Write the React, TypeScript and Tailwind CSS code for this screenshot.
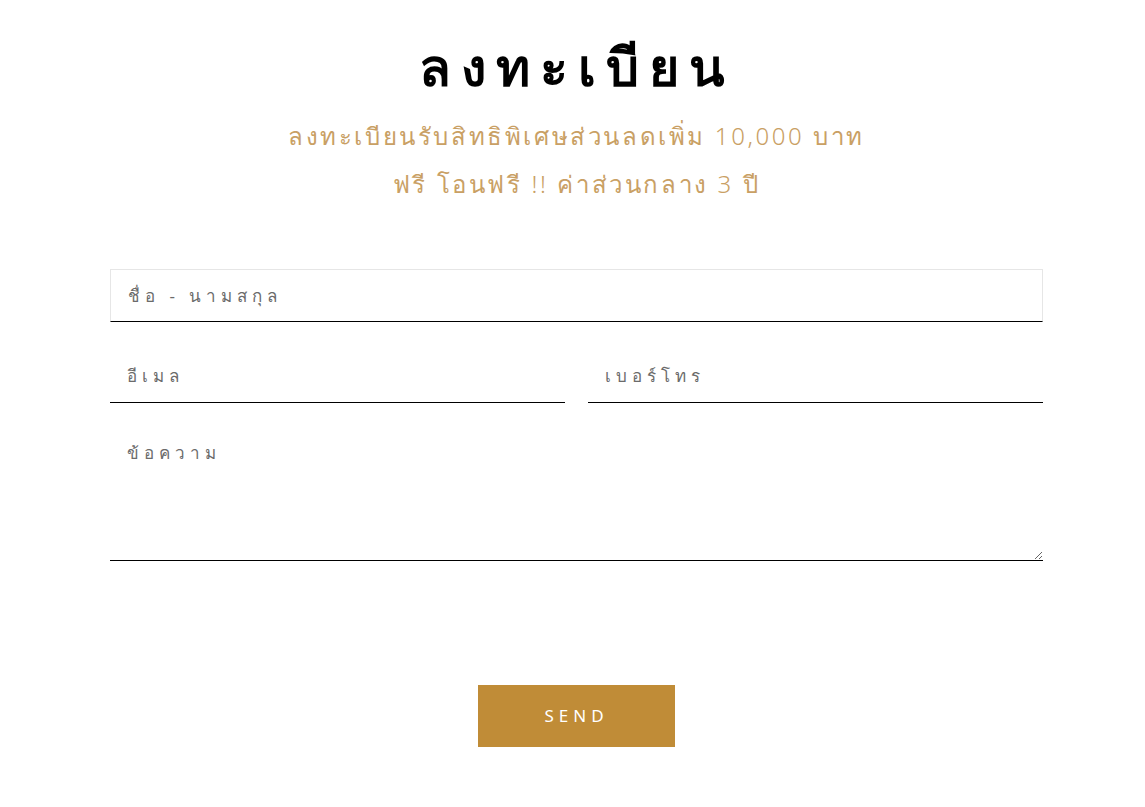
export default function App() {
  return (
    <div className="min-h-[807px] bg-white font-['Noto_Sans',sans-serif]">
      <div className="ml-[110px] w-[933px] pt-[34px]">
        <h1 className="text-center text-[52px] font-bold leading-[64px] tracking-[10px] text-black">
          ลงทะเบียน
        </h1>
        <p className="mt-[14px] text-center text-[24px] font-light leading-[48px] tracking-[2.6px] text-[#c9a064]">
          ลงทะเบียนรับสิทธิพิเศษส่วนลดเพิ่ม 10,000 บาท
          <br />
          ฟรี โอนฟรี !! ค่าส่วนกลาง 3 ปี
        </p>

        <form className="mt-[61px] flex flex-col" onSubmit={(e) => e.preventDefault()}>
          <input
            type="text"
            placeholder="ชื่อ - นามสกุล"
            className="h-[53px] w-full border border-b-black border-[#e6e6e6] px-[17px] text-[17px] tracking-[5px] text-gray-700 outline-none placeholder:text-[#6b6b6b]"
          />
          <div className="mt-[27px] flex gap-[23px]">
            <input
              type="email"
              placeholder="อีเมล"
              className="h-[54px] flex-1 border-b border-black px-[17px] text-[17px] tracking-[5px] outline-none placeholder:text-[#6b6b6b]"
            />
            <input
              type="tel"
              placeholder="เบอร์โทร"
              className="h-[54px] flex-1 border-b border-black px-[17px] text-[17px] tracking-[5px] outline-none placeholder:text-[#6b6b6b]"
            />
          </div>
          <textarea
            placeholder="ข้อความ"
            className="mt-[27px] h-[131px] w-full border-b border-black px-[17px] pt-[10px] text-[17px] tracking-[5px] outline-none placeholder:text-[#6b6b6b]"
          />
          <div className="mt-[124px] flex justify-center">
            <button
              type="submit"
              className="h-[62px] w-[197px] bg-[#c08c37] text-[17px] tracking-[5px] text-white"
            >
              SEND
            </button>
          </div>
        </form>
      </div>
    </div>
  );
}
